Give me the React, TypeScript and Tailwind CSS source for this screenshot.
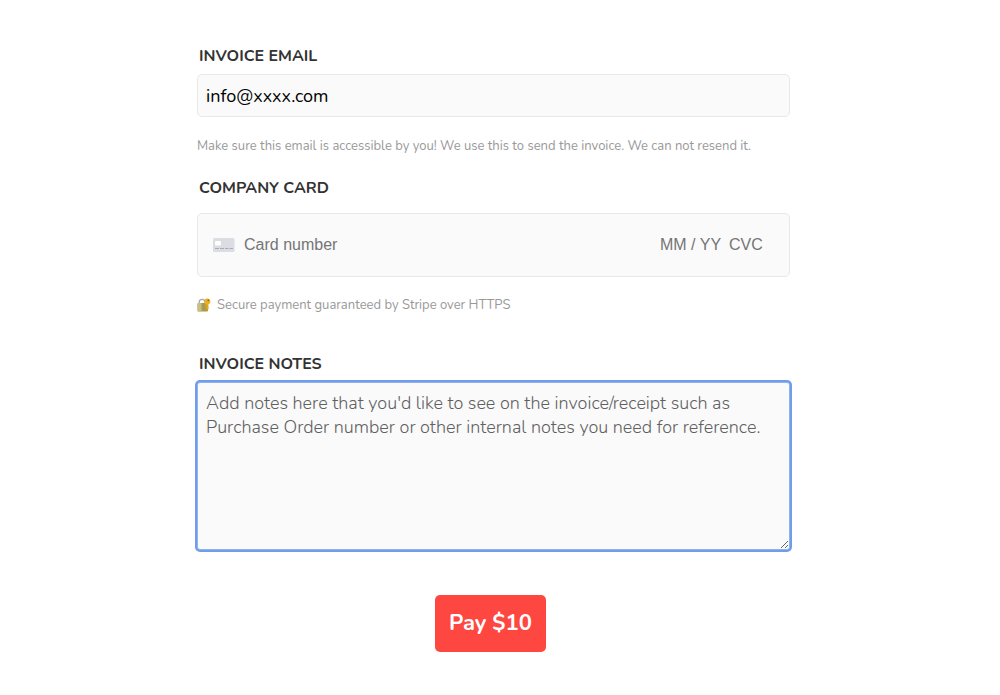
import React from "react";

const Label = ({
  htmlFor,
  children,
}: {
  htmlFor: string;
  children: React.ReactNode;
}) => (
  <label
    htmlFor={htmlFor}
    className="block pl-0.5 text-[16px] leading-5 font-bold text-[#333333] uppercase"
  >
    {children}
  </label>
);

const CardIcon = () => (
  <svg width="22" height="14" viewBox="0 0 22 14" aria-hidden="true">
    <rect width="21.5" height="14" rx="1.5" fill="#dcdce3" />
    <rect x="2" y="3" width="6" height="4.5" rx="1" fill="#ffffff" />
    <path
      d="M2 10.5h4M7 10.5h4M12 10.5h3.5M16.5 10.5h3.5"
      stroke="#aaaab8"
      strokeWidth="1.2"
    />
  </svg>
);

const LockIcon = () => (
  <svg width="14" height="14" viewBox="0 0 14 14" aria-hidden="true">
    <path
      d="M2.2 6.5V4.2a2.9 2.9 0 0 1 5.8 0v2.3"
      fill="none"
      stroke="#a3a8ad"
      strokeWidth="1.3"
    />
    <rect x="0.5" y="5" width="10.5" height="8.5" rx="1" fill="#a89a50" />
    <rect x="0.5" y="5" width="4" height="8.5" rx="1" fill="#c9bf85" />
    <path d="M8.4 4.2l2.8-.6.4 7.3-1.3 1.1-1.5-1.1z" fill="#e3a419" />
    <circle cx="10.3" cy="3.6" r="3" fill="#eab027" />
    <circle cx="11.3" cy="2.4" r="0.8" fill="#8a5b0e" />
  </svg>
);

const CARD_FIELD =
  "min-w-0 bg-transparent font-['Liberation_Sans',sans-serif] text-[16px] leading-5 text-black outline-none placeholder:text-[#757575]";

const App = () => {
  return (
    <main className="bg-white pt-[46px] pr-[13px] pb-11 font-['Nunito','Lato',sans-serif]">
      <form
        className="mx-auto flex w-full max-w-[593px] flex-col"
        onSubmit={(e) => e.preventDefault()}
      >
        <Label htmlFor="email">Invoice email</Label>
        <input
          id="email"
          type="email"
          defaultValue="info@xxxx.com"
          className="mt-2 h-[43px] w-full rounded-[5px] border border-[#e8e8e8] bg-[#fafafa] px-2 text-[18px] text-black outline-none"
        />
        <p className="mt-[19px] text-[13px] leading-5 text-[#999999]">
          Make sure this email is accessible by you! We use this to send the
          invoice. We can not resend it.
        </p>

        <div className="mt-[22px]">
          <Label htmlFor="card">Company card</Label>
          <div className="mt-[15px] flex h-16 items-center rounded-[5px] border border-[#e8e8e8] bg-[#fafafa] pr-[26px] pl-[15px]">
            <CardIcon />
            <input
              id="card"
              placeholder="Card number"
              className={`ml-[9px] flex-1 ${CARD_FIELD}`}
            />
            <input
              aria-label="Expiry date"
              placeholder="MM / YY"
              className={`w-[69px] ${CARD_FIELD}`}
            />
            <input
              aria-label="CVC"
              placeholder="CVC"
              className={`w-[34px] ${CARD_FIELD}`}
            />
          </div>
        </div>
        <p className="mt-[18px] flex items-center text-[13px] leading-5 text-[#999999]">
          <LockIcon />
          <span className="ml-1.5">
            Secure payment guaranteed by Stripe over HTTPS
          </span>
        </p>

        <div className="mt-[39px]">
          <Label htmlFor="notes">Invoice notes</Label>
          <textarea
            id="notes"
            placeholder="Add notes here that you'd like to see on the invoice/receipt such as Purchase Order number or other internal notes you need for reference."
            className="mt-2 block h-[168px] w-full resize rounded-[3px] border border-[#8fb3f0] bg-[#fafafa] px-2 py-2 text-[18px] leading-6 font-light text-black ring-2 ring-[#6f9dea] outline-none placeholder:text-[#606060]"
          />
        </div>

        <button
          type="submit"
          className="mt-[45px] mr-1.5 h-[57px] self-center rounded-[5px] bg-[#ff4742] px-[14px] text-[22px] font-bold text-white"
        >
          Pay $10
        </button>
      </form>
    </main>
  );
};

export default App;
